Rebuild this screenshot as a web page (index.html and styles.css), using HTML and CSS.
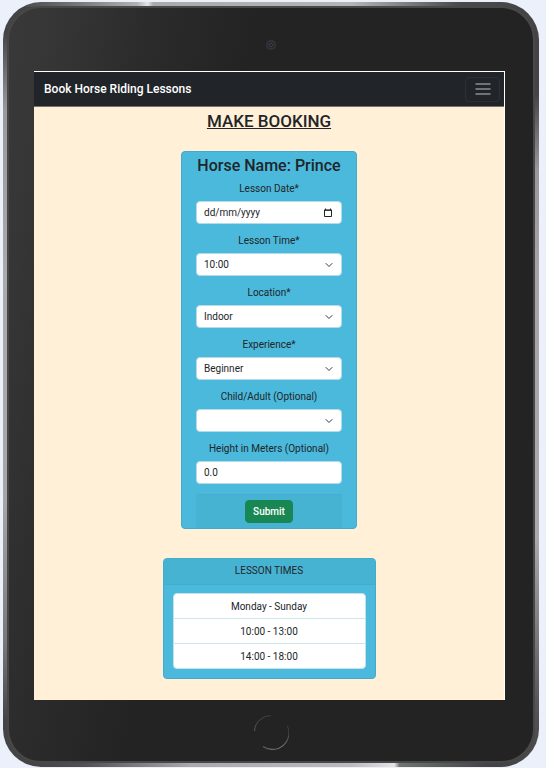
FILE: index.html
```html
<!DOCTYPE html>
<html lang="en-GB">
<head>
<meta charset="utf-8">
<meta name="viewport" content="width=device-width, initial-scale=1">
<title>Book Horse Riding Lessons</title>
<link rel="stylesheet" href="styles.css">
</head>
<body>
<div class="tablet">
  <div class="bezel">
    <div class="bezel-top">
      <svg class="camera" width="12" height="12" viewBox="0 0 12 12" aria-hidden="true">
        <circle cx="6" cy="6" r="4.3" fill="#29292d" stroke="#37363c" stroke-width="1.4"/>
        <circle cx="6" cy="6" r="1.6" fill="#222238" stroke="#3d3c45"/>
      </svg>
    </div>
    <div class="screen">
      <nav class="navbar">
        <a class="brand" href="#">Book Horse Riding Lessons</a>
        <button class="toggler" type="button" aria-label="Toggle navigation">
          <svg width="20" height="20" viewBox="0 0 20 20" aria-hidden="true">
            <path d="M3 5h14M3 10h14M3 15h14" stroke="#8b8f90" stroke-width="1.5" stroke-linecap="round"/>
          </svg>
        </button>
      </nav>
      <main class="content">
        <h1 class="title">MAKE BOOKING</h1>
        <form class="card booking">
          <h2 class="horse">Horse Name: Prince</h2>
          <div class="field">
            <label for="date">Lesson Date*</label>
            <input class="control date" id="date" type="text" placeholder="dd/mm/yyyy">
          </div>
          <div class="field">
            <label for="time">Lesson Time*</label>
            <select class="control select" id="time"><option>10:00</option></select>
          </div>
          <div class="field">
            <label for="location">Location*</label>
            <select class="control select" id="location"><option>Indoor</option></select>
          </div>
          <div class="field">
            <label for="experience">Experience*</label>
            <select class="control select" id="experience"><option>Beginner</option></select>
          </div>
          <div class="field">
            <label for="age">Child/Adult (Optional)</label>
            <select class="control select" id="age"><option></option></select>
          </div>
          <div class="field">
            <label for="height">Height in Meters (Optional)</label>
            <input class="control" id="height" type="text" value="0.0">
          </div>
          <div class="form-footer">
            <button class="submit" type="submit">Submit</button>
          </div>
        </form>
        <section class="card times">
          <h2 class="times-header">LESSON TIMES</h2>
          <ul class="times-list">
            <li>Monday - Sunday</li>
            <li>10:00 - 13:00</li>
            <li>14:00 - 18:00</li>
          </ul>
        </section>
      </main>
    </div>
    <div class="bezel-bottom">
      <svg class="home" width="36" height="36" viewBox="0 0 36 36" fill="none" aria-hidden="true">
        <defs>
          <linearGradient id="arc-left" x1="0" y1="1" x2="1" y2="0">
            <stop offset="0" stop-color="#5a5a5a"/>
            <stop offset="1" stop-color="#3a3a3a"/>
          </linearGradient>
          <linearGradient id="arc-right" x1="1" y1="0" x2="0" y2="1">
            <stop offset="0" stop-color="#333"/>
            <stop offset=".6" stop-color="#777"/>
            <stop offset="1" stop-color="#555"/>
          </linearGradient>
        </defs>
        <path d="M1.5 17A16.5 16.5 0 0 1 18 1.5" stroke="url(#arc-left)"/>
        <path d="M34.4 12A16.5 16.5 0 0 1 10 32.5" stroke="url(#arc-right)" stroke-width="1.2"/>
      </svg>
    </div>
  </div>
</div>
</body>
</html>
```
FILE: styles.css
```css
* {
  box-sizing: border-box;
}

body {
  margin: 0;
  min-height: 100vh;
  display: flex;
  padding: 1px 7px 1px 3px;
  border-top: 1px solid #ebf0fa;
  background: linear-gradient(#d3e0f5 1px, #ebf0fa 1px);
  color: #212529;
  font-family: Roboto, "Liberation Sans", sans-serif;
  font-size: 10px;
  line-height: 15px;
}

.tablet {
  flex: 1;
  display: flex;
  padding: 4px;
  border-radius: 38px;
  background:
    linear-gradient(90deg, #444 2%, #777 14%, #b0b2b1 25%, #e4e6e5 27%, #aaa 28%, #b4b6b5 65%, #4a4a4a 85%, #444) top / 100% 5px no-repeat,
    linear-gradient(90deg, #444 6%, #505050 15%, #aaa 35%, #bbb 65%, #e4e4e4 73%, #707470 74%, #444 90%) bottom / 100% 5px no-repeat,
    linear-gradient(#444 4%, #999 14%, #aaa 35%, #a5a7a6 65%, #777 84%, #444 94%) left / 50% 100% no-repeat,
    linear-gradient(#444 12%, #999 22%, #aaa2a6 35%, #aaa 70%, #555 92%, #444) right / 50% 100% no-repeat;
}

.bezel {
  flex: 1;
  display: flex;
  flex-direction: column;
  padding: 0 28px 0 25px;
  border: 2px solid #484848;
  border-radius: 34px;
  background: linear-gradient(100deg, #393939 0, #363636 7%, #2b2b2b 22%, #232323 38%);
}

.bezel-top {
  height: 63px;
  display: flex;
  justify-content: center;
  align-items: center;
  padding: 11px 0 0 3px;
}

.bezel-bottom {
  height: 61px;
  display: flex;
  justify-content: center;
  align-items: center;
  padding: 3px 0 0 3px;
}

.screen {
  flex: 1;
  border-top: 1px solid #fff;
  border-right: 1px solid #fff;
  background: #fff0d7;
}

.navbar {
  height: 35px;
  display: flex;
  justify-content: space-between;
  align-items: center;
  padding: 0 4px 0 10px;
  border-bottom: 1px solid #77736c;
  background: #212529;
}

.brand {
  color: #fff;
  font-size: 12px;
  font-weight: 500;
  text-decoration: none;
}

.toggler {
  width: 35px;
  height: 25px;
  display: flex;
  justify-content: center;
  align-items: center;
  padding: 0;
  border: 1px solid #2d3135;
  border-radius: 4px;
  background: none;
}

.content {
  display: flex;
  flex-direction: column;
  align-items: center;
  padding: 4px 0 20px;
}

.title {
  margin: 0 0 20px;
  font-size: 17px;
  font-weight: 500;
  line-height: 20px;
  text-decoration: underline;
}

.card {
  border: 1px solid #41abcb;
  border-radius: 4px;
  background: #4ab9db;
  text-align: center;
}

.booking {
  width: 100%;
  max-width: 176px;
  padding: 4px 14px 0;
}

.horse {
  margin: 0 0 5px;
  font-size: 16px;
  font-weight: 500;
  line-height: 20px;
  white-space: nowrap;
}

.field {
  display: flex;
  flex-direction: column;
  gap: 5px;
  margin-bottom: 9px;
}

.control {
  width: 100%;
  height: 23px;
  padding: 0 7px;
  border: 1px solid #b5dbe8;
  border-radius: 4px;
  background-color: #fff;
  color: #212529;
  font: inherit;
}

.control::placeholder {
  color: #212529;
}

.date {
  background-image: url("data:image/svg+xml,%3Csvg xmlns='http://www.w3.org/2000/svg' viewBox='0 0 10 10' fill='none'%3E%3Cpath d='M1.5 2h7v6.5h-7z' stroke='%23222'/%3E%3Cpath d='M1 2.3h8M2.5 .5v1.5M7.5 .5v1.5' stroke='%23222'/%3E%3C/svg%3E");
  background-repeat: no-repeat;
  background-position: right 8px center;
  background-size: 10px 10px;
}

.select {
  appearance: none;
  background-image: url("data:image/svg+xml,%3Csvg xmlns='http://www.w3.org/2000/svg' viewBox='0 0 16 16'%3E%3Cpath fill='none' stroke='%23343a40' stroke-linecap='round' stroke-linejoin='round' stroke-width='2' d='m2 5 6 6 6-6'/%3E%3C/svg%3E");
  background-repeat: no-repeat;
  background-position: right 8px center;
  background-size: 8px 8px;
}

.form-footer {
  margin-top: 10px;
  padding: 5px 0;
  border-top: 1px solid #44afcf;
  background: #47b3d3;
}

.submit {
  height: 23px;
  padding: 0 7px;
  border: 1px solid #198754;
  border-radius: 4px;
  background: #198754;
  color: #fff;
  font: inherit;
  font-weight: 500;
}

.times {
  width: 100%;
  max-width: 213px;
  margin-top: 29px;
}

.times-header {
  margin: 0;
  padding: 4px 10px 6px;
  border-bottom: 1px solid #43adcd;
  background: #47b3d3;
  font-size: 10px;
  font-weight: 400;
  line-height: 15px;
}

.times-list {
  margin: 8px 9px 9px;
  padding: 0;
  border: 1px solid #c5e2eb;
  border-radius: 4px;
  background: #fff;
  list-style: none;
}

.times-list li {
  padding: 5px 0 4px;
}

.times-list li + li {
  border-top: 1px solid #cfe5ee;
}
```
